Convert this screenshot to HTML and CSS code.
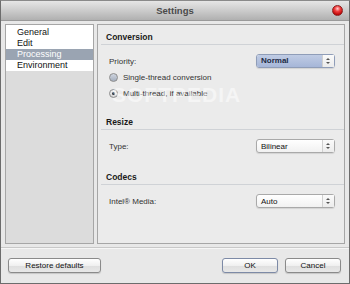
FILE: index.html
```html
<!DOCTYPE html>
<html lang="en">
<head>
    <meta charset="UTF-8">
    <title>Settings</title>
    <link rel="stylesheet" href="styles.css">
</head>
<body>
    <div class="window">
        <div class="titlebar">
            <span></span>
            <span class="title">Settings</span>
            <span class="close"></span>
        </div>

        <div class="main">
            <div class="sidebar">
                <ul class="list">
                    <li>General</li>
                    <li>Edit</li>
                    <li class="selected">Processing</li>
                    <li>Environment</li>
                </ul>
            </div>

            <div class="panel">
                <div class="section">
                    <div class="section-title">Conversion</div>
                    <div class="rows">
                        <div class="row">
                            <span>Priority:</span>
                            <div class="select focused"><span>Normal</span><i class="arrows"></i></div>
                        </div>
                        <div class="row radio-row">
                            <span class="radio"></span>
                            <span>Single-thread conversion</span>
                        </div>
                        <div class="row radio-row">
                            <span class="radio checked"></span>
                            <span>Multi-thread, if available</span>
                        </div>
                    </div>
                </div>

                <div class="section resize">
                    <div class="section-title">Resize</div>
                    <div class="rows">
                        <div class="row">
                            <span>Type:</span>
                            <div class="select"><span>Bilinear</span><i class="arrows"></i></div>
                        </div>
                    </div>
                </div>

                <div class="section codecs">
                    <div class="section-title">Codecs</div>
                    <div class="rows">
                        <div class="row">
                            <span>Intel® Media:</span>
                            <div class="select"><span>Auto</span><i class="arrows"></i></div>
                        </div>
                    </div>
                </div>

                <div class="watermark">SOFTPEDIA</div>
            </div>
        </div>

        <div class="footer">
            <button class="btn restore">Restore defaults</button>
            <span class="spacer"></span>
            <button class="btn ok">OK</button>
            <button class="btn cancel">Cancel</button>
        </div>
    </div>
</body>
</html>
```

FILE: styles.css
```css
/* Window frame */
* {
    box-sizing: border-box;
}

body {
    margin: 0;
    font-family: "Liberation Sans", Arial, sans-serif;
    font-size: 8px;
    color: #333;
}

.window {
    width: 350px;
    height: 284px;
    border: 1px solid #6c6c6c;
    border-top-color: #8a8a8a;
    background-color: #e8e8e8;
    display: flex;
    flex-direction: column;
}

/* Title bar */
.titlebar {
    height: 20px;
    display: grid;
    grid-template-columns: 20px 1fr 20px;
    align-items: center;
    background: linear-gradient(#e6e6e6, #c9c9c9 55%, #b0b0b0);
    border-bottom: 1px solid #9a9a9a;
}

.title {
    text-align: center;
    font-size: 9.5px;
    font-weight: bold;
    color: #4a4a4a;
}

.close {
    width: 11px;
    height: 11px;
    border-radius: 50%;
    margin-left: 3px;
    background: radial-gradient(circle at 50% 30%, #ffd0d0 0, #f24040 35%, #b80000 80%, #7a0000 100%);
    border: 1px solid #8a2020;
}

/* Main area */
.main {
    flex: 1;
    display: flex;
    gap: 3px;
    padding: 3px 4px 0 4px;
}

.sidebar {
    width: 89px;
    border: 1px solid #a6a6a6;
    background-color: #dcdcdc;
}

.list {
    list-style: none;
    margin: 0;
    padding: 2px 0 0 0;
    background-color: #fff;
    font-size: 9px;
    color: #111;
}

.list li {
    height: 11px;
    line-height: 11px;
    padding-left: 11px;
}

.list .selected {
    background-color: #9aa4b2;
    color: #fff;
}

.panel {
    flex: 1;
    position: relative;
    border: 1px solid #a6a6a6;
    background-color: #ebebeb;
    padding-top: 5px;
}

/* Sections */
.section-title {
    height: 15px;
    line-height: 14px;
    margin-left: 3px;
    padding-left: 5px;
    font-size: 8.5px;
    font-weight: bold;
    color: #1a1a1a;
    border-bottom: 1px solid #cfd2d6;
}

.rows {
    padding: 8px 9px 0 11px;
}

.row {
    height: 16px;
    display: flex;
    align-items: center;
    justify-content: space-between;
}

.radio-row {
    justify-content: flex-start;
    gap: 5px;
}

.resize {
    margin-top: 14px;
}

.codecs {
    margin-top: 16px;
}

/* Select boxes */
.select {
    width: 79px;
    height: 14px;
    display: flex;
    align-items: center;
    border: 1px solid #a9a9a9;
    border-radius: 3px;
    background: linear-gradient(#ffffff, #f1f1f1);
    color: #111;
    box-shadow: 0 1px 1px rgba(0, 0, 0, 0.1);
}

.select span {
    flex: 1;
    padding-left: 4px;
}

.select.focused {
    border-color: #8f9db8;
}

.select.focused span {
    align-self: stretch;
    line-height: 12px;
    background: linear-gradient(#c0cce4, #a6b6d8);
    border-radius: 2px 0 0 2px;
    font-weight: bold;
    color: #1c2a44;
}

.arrows {
    width: 12px;
    height: 12px;
    border-left: 1px solid #d0d0d0;
    background: linear-gradient(#fafafa, #ececec);
    position: relative;
}

.arrows::before,
.arrows::after {
    content: "";
    position: absolute;
    left: 3px;
    border-left: 2px solid transparent;
    border-right: 2px solid transparent;
}

.arrows::before {
    top: 3px;
    border-bottom: 2px solid #555;
}

.arrows::after {
    top: 7px;
    border-top: 2px solid #555;
}

/* Radio buttons */
.radio {
    width: 9px;
    height: 9px;
    border-radius: 50%;
    border: 1px solid #8c8c8c;
    background: linear-gradient(#d0d6e0, #a4aebe);
    position: relative;
}

.radio.checked {
    background: linear-gradient(#f4f4f4, #d4d4d4);
}

.radio.checked::after {
    content: "";
    position: absolute;
    left: 2px;
    top: 2px;
    width: 3px;
    height: 3px;
    border-radius: 50%;
    background-color: #333;
}

/* Watermark */
.watermark {
    position: absolute;
    left: 14px;
    top: 58px;
    font-size: 21px;
    font-weight: bold;
    letter-spacing: 1px;
    color: rgba(255, 255, 255, 0.5);
    pointer-events: none;
}

/* Footer */
.footer {
    height: 36px;
    margin-top: 3px;
    border-top: 1px solid #c8c8c8;
    box-shadow: inset 0 1px 0 #f6f6f6;
    display: flex;
    align-items: flex-start;
    gap: 7px;
    padding: 10px 8px 0 7px;
}

.spacer {
    flex: 1;
}

.btn {
    height: 15px;
    padding: 0;
    font-family: "Liberation Sans", Arial, sans-serif;
    font-size: 8px;
    color: #111;
    border: 1px solid #8a8a8a;
    border-radius: 3px;
    background: linear-gradient(#ffffff, #f0f0f0 50%, #dedede 51%, #e8e8e8);
    box-shadow: 0 1px 1px rgba(0, 0, 0, 0.15);
}

.restore {
    width: 93px;
}

.ok {
    width: 56px;
    border-color: #7d8aa6;
}

.cancel {
    width: 56px;
}
```
